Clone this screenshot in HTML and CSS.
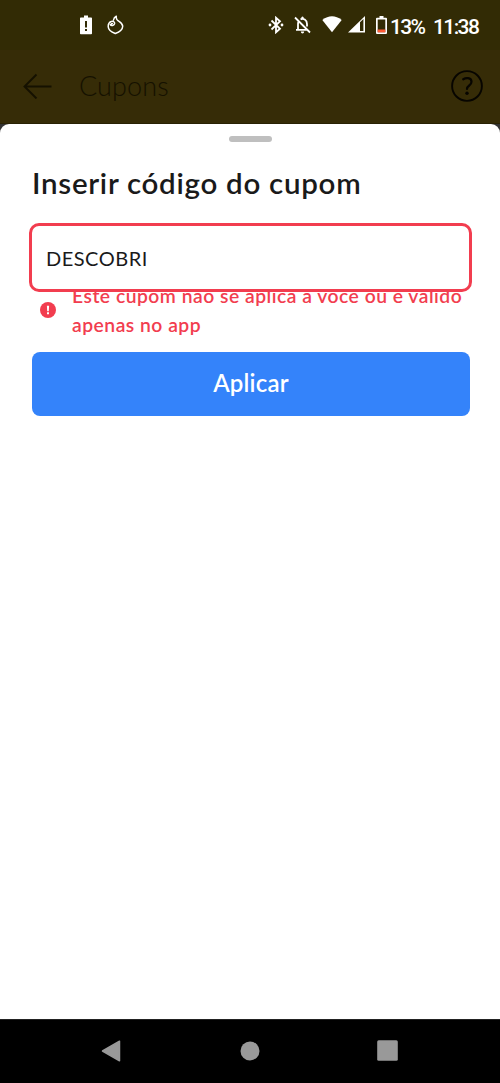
FILE: index.html
```html
<!DOCTYPE html>
<html lang="pt-BR">

<head>
  <meta charset="UTF-8">
  <meta name="viewport" content="width=device-width, initial-scale=1.0">
  <title>Cupons</title>
  <link rel="stylesheet" href="styles.css">
</head>

<body>
  <div class="status-bar">
    <div class="status-left">
      <!-- battery alert -->
      <svg class="status-icon" width="12" height="20" viewBox="0 0 12 20">
        <path fill="#fff" fill-rule="evenodd" d="M4 0.5h4v2h3.2q.8 0 .8.8V18.500q0 .8-.8.8H.8q-.8 0-.8-.8V3.300q0-.8.8-.8H4zM5 6v6.500h2V6zM5 14v2h2v-2z"/>
      </svg>
      <svg class="status-icon" width="17" height="20" viewBox="0 0 17 20">
        <path fill="none" stroke="#fff" stroke-width="1.500" stroke-linecap="round" stroke-linejoin="round" d="M3.300 9.700C4 11.200 7.200 10.800 7.600 8.700C7.900 6.800 6 6 4.300 6.500C2 7.300 1.100 9.300 1.200 11.700C1.400 15 5 17.300 8.300 18.500C12.300 17 15.600 14.700 15.700 11.200C15.800 8 11.400 6.700 9.800 4.300Q9 3 9.300 1.200Q6.900 2.500 6.500 5M4 9.700Q4 8.500 5.300 8.500"/>
      </svg>
    </div>
    <div class="status-right">
      <svg class="status-icon" width="16" height="18" viewBox="0 0 16 18">
        <path fill="none" stroke="#fff" stroke-width="1.800" d="M3.500 4.500L12 12.800L8 16.300V1.700L12 5.200L3.500 13.500"/>
        <circle cx="2" cy="9" r="1.400" fill="#fff"/>
        <circle cx="14" cy="9" r="1.400" fill="#fff"/>
      </svg>
      <!-- muted notifications -->
      <svg class="status-icon bell" width="17" height="18" viewBox="0 0 17 18">
        <path fill="none" stroke="#fff" stroke-width="1.800" d="M1 1.500L16 16.500M2 13.800H13M4 13.500V8Q4 6.500 4.700 5.200M6.500 3.400Q8.500 2.300 10.800 3.500Q13 5 13 8V10.500"/>
        <path fill="#fff" d="M7.300 3V1.500Q8.500-.3 9.700 1.500V3zM6.800 15.500h3.400Q10 17.400 8.500 17.400T6.800 15.500z"/>
      </svg>
      <svg class="status-icon wifi" width="20" height="17" viewBox="0 0 20 17">
        <path fill="#fff" d="M.3 4Q10-3.500 19.700 4L10 16.300z"/>
      </svg>
      <svg class="status-icon signal" width="17" height="17" viewBox="0 0 17 17">
        <path fill="#fff" fill-rule="evenodd" d="M17 0V16.500H0zM12 6.300V15h3.400V3z"/>
      </svg>
      <svg class="status-icon battery" width="11" height="19" viewBox="0 0 11 19">
        <path fill="#fff" fill-rule="evenodd" d="M3.500 0h4v1.700H10q1 0 1 1V17q0 1-1 1H1q-1 0-1-1V2.700q0-1 1-1h2.500zM1.700 3.400V16.300h7.600V3.400z"/>
        <path fill="#ff5a36" d="M1.700 13.500h7.600v2.800H1.700z"/>
      </svg>
      <span class="percent">13%</span>
      <span class="clock">11:38</span>
    </div>
  </div>

  <div class="header">
    <svg class="back" width="30" height="26" viewBox="0 0 30 26">
      <path fill="none" stroke="#151100" stroke-width="1.900" d="M28.500 13.500H1.500M13.500 1.500L1.500 13.500L13.500 25.500"/>
    </svg>
    <span class="title">Cupons</span>
    <svg class="help" width="32" height="32" viewBox="0 0 32 32">
      <circle cx="16" cy="16" r="14.900" fill="none" stroke="#070500" stroke-width="1.900"/>
      <path fill="none" stroke="#070500" stroke-width="2.200" stroke-linecap="round" stroke-linejoin="round" d="M12.200 9.300Q14.500 7.900 17 8.200Q20.600 8.700 20.500 11.800Q20.500 13.800 18.200 15.500Q16 17.200 16 19"/>
      <circle cx="16" cy="23.200" r="1.700" fill="#070500"/>
    </svg>
  </div>

  <div class="sheet-wrap">
    <div class="sheet">
      <div class="handle"></div>
      <h1>Inserir código do cupom</h1>
      <div class="field">DESCOBRI</div>
      <div class="error">
        <svg class="error-icon" width="16" height="16" viewBox="0 0 16 16">
          <circle cx="8" cy="8" r="8" fill="#f23d4f"/>
          <path fill="#fff" d="M6.900 3.700h2.200L8.800 9.200H7.200zM7 10.300h2v2H7z"/>
        </svg>
        <p class="error-text">
          <span class="line-one">Este cupom não se aplica a você ou é válido</span><br>
          <span class="line-two">apenas no app</span>
        </p>
      </div>
      <div class="button">Aplicar</div>
    </div>
  </div>

  <div class="nav-bar">
    <svg width="20" height="24" viewBox="0 0 20 24">
      <path fill="#999" stroke="#999" stroke-width="1.500" stroke-linejoin="round" d="M18.500 2.200V21.800L1.500 12z"/>
    </svg>
    <svg class="home" width="20" height="20" viewBox="0 0 20 20">
      <circle cx="10" cy="10" r="9.500" fill="#999"/>
    </svg>
    <svg width="21" height="21" viewBox="0 0 21 21">
      <rect x="0.200" y="0.200" width="20.600" height="20.600" rx="1.500" fill="#999"/>
    </svg>
  </div>
</body>

</html>
```
FILE: styles.css
```css
body {
  margin: 0;
  height: 1083px;
  display: flex;
  flex-direction: column;
  background-color: #fff;
  color: #1a1a1a;
  font-family: Lato, "Open Sans", sans-serif;
  overflow: hidden;
}

svg {
  display: block;
  flex: none;
}

.status-bar {
  height: 50px;
  box-sizing: border-box;
  padding: 15px 21px 0 80px;
  display: flex;
  justify-content: space-between;
  background-color: #322b05;
  color: #fff;
}

.status-left {
  display: flex;
  gap: 15px;
}

.status-right {
  display: flex;
  align-items: flex-start;
}

.status-right .status-icon {
  margin-top: 1px;
}

.status-right .bell {
  margin-left: 10px;
}

.status-right .wifi {
  margin-left: 11px;
}

.status-right .signal {
  margin-left: 6px;
}

.status-right .battery {
  margin-left: 11px;
}

.percent,
.clock {
  font-family: Roboto, sans-serif;
  font-size: 21px;
  font-weight: 500;
  line-height: 24px;
  white-space: nowrap;
}

.percent {
  width: 36px;
  margin-left: 3px;
  letter-spacing: -1.7px;
}

.clock {
  width: 46px;
  margin-left: 7px;
  letter-spacing: -1.6px;
}

.header {
  height: 74px;
  box-sizing: border-box;
  padding: 0 17px 2px 23px;
  display: flex;
  align-items: center;
  background-color: #362c07;
  border-bottom: 1px solid #292204;
}

.title {
  flex: 1;
  margin: -1px 0 0 26px;
  font-size: 27px;
  font-weight: 300;
  letter-spacing: 0.1px;
  color: #151100;
}

.sheet-wrap {
  flex: 1;
  background-color: #333;
}

.sheet {
  height: 100%;
  box-sizing: border-box;
  padding: 12px 28px 0 29px;
  display: flex;
  flex-direction: column;
  background-color: #fff;
  border-radius: 9px 9px 0 0;
}

.handle {
  width: 43px;
  height: 6px;
  margin-left: 200px;
  border-radius: 3px;
  background-color: #bfbfbf;
}

h1 {
  margin: 23px 0 0 3px;
  font-size: 29.5px;
  line-height: 36px;
  font-weight: 600;
  letter-spacing: 0.72px;
  white-space: nowrap;
}

.field {
  position: relative;
  z-index: 1;
  height: 69px;
  box-sizing: border-box;
  margin-top: 22px;
  padding-left: 14px;
  border: 3px solid #f23d4f;
  border-radius: 10px;
  background-color: #fff;
  font-size: 20px;
  line-height: 64px;
  letter-spacing: 0.5px;
}

.error {
  display: flex;
  align-items: center;
  height: 58px;
  margin-top: -11px;
  padding-left: 11px;
  color: #f23d4f;
}

.error-icon {
  margin-top: 0;
}

.error-text {
  margin: 0 0 0 16px;
  font-size: 19.3px;
  line-height: 29px;
  font-weight: 600;
  letter-spacing: 0.5px;
  white-space: nowrap;
}

.button {
  height: 64px;
  margin: 13px 2px 0 3px;
  border-radius: 8px;
  background-color: #3483fa;
  color: #fff;
  font-size: 24px;
  line-height: 62px;
  font-weight: 600;
  letter-spacing: 0.2px;
  text-align: center;
}

.nav-bar {
  height: 64px;
  box-sizing: border-box;
  padding: 0 102px 2px 101px;
  display: flex;
  align-items: center;
  justify-content: space-between;
  background-color: #000;
  border-top: 1px solid #222;
}

.home {
  margin-left: 2px;
}
```
